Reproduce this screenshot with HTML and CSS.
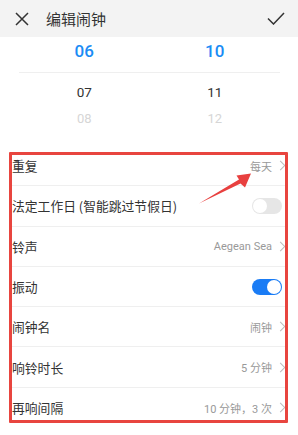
FILE: index.html
```html
<!DOCTYPE html>
<html lang="zh-CN">
<head>
<meta charset="utf-8">
<link rel="stylesheet" href="styles.css">
</head>
<body>
<div class="page">
  <header class="topbar">
    <svg class="ico-close" width="14" height="14" viewBox="0 0 14 14"><path d="M1 1 L13 13 M13 1 L1 13" stroke="#333" stroke-width="1.5" fill="none"/></svg>
    <span class="title">编辑闹钟</span>
    <svg class="ico-check" width="18" height="13" viewBox="0 0 18 13"><path d="M1 6.5 L6.5 12 L17 1" stroke="#333" stroke-width="1.5" fill="none"/></svg>
  </header>
  <section class="picker">
    <div class="prow sel"><span>06</span><span>10</span></div>
    <div class="prow next"><span>07</span><span>11</span></div>
    <div class="prow far"><span>08</span><span>12</span></div>
  </section>
  <section class="list">
    <div class="row"><span class="label">重复</span><span class="val">每天<i class="chev"></i></span></div>
    <div class="row"><span class="label">法定工作日 (智能跳过节假日)</span><span class="switch"></span></div>
    <div class="row"><span class="label">铃声</span><span class="val">Aegean Sea<i class="chev"></i></span></div>
    <div class="row"><span class="label">振动</span><span class="switch on"></span></div>
    <div class="row"><span class="label">闹钟名</span><span class="val">闹钟<i class="chev"></i></span></div>
    <div class="row"><span class="label">响铃时长</span><span class="val">5 分钟<i class="chev"></i></span></div>
    <div class="row"><span class="label">再响间隔</span><span class="val">10 分钟，3 次<i class="chev"></i></span></div>
  </section>
  <div class="redbox"></div>
  <svg class="arrow" width="298" height="435" viewBox="0 0 298 435"><polygon points="199,203.5 240.5,183.5 245,187.5 251,173.5 236.5,175.5 239,179.5" fill="#e8403f"/></svg>
</div>
</body>
</html>
```
FILE: styles.css
```css
* { box-sizing: border-box; }
html, body { margin: 0; padding: 0; background: #fff; }
.page {
  position: relative;
  width: 298px;
  height: 435px;
  overflow: hidden;
  font-family: Roboto, "Noto Sans CJK SC", sans-serif;
  color: #333;
}
.topbar {
  height: 37px;
  background: #f3f3f3;
  display: flex;
  align-items: center;
  padding: 0 13px 0 15px;
}
.ico-close { flex: none; }
.title {
  margin-left: 17px;
  font-size: 15px;
  color: #333;
  font-family: "Noto Sans CJK SC", sans-serif;
  flex: 1;
}
.ico-check { flex: none; margin-top: -1px; }
.picker {
  padding: 0 18px 0 19px;
  height: 109px;
}
.prow {
  display: grid;
  grid-template-columns: 1fr 1fr;
  text-align: center;
}
.prow.sel {
  height: 36px;
  line-height: 28px;
  font-size: 17px;
  font-weight: 500;
  color: #1a8cf5;
  border-bottom: 1px solid #efefef;
}
.prow.next {
  height: 38px;
  line-height: 38px;
  font-size: 13.5px;
  color: #333;
}
.prow.far {
  height: 16px;
  line-height: 16px;
  font-size: 13px;
  color: #d6d6d6;
}
.list { margin: 0 12px; }
.row {
  height: 40.3px;
  display: flex;
  align-items: center;
  justify-content: space-between;
  border-bottom: 1px solid #efefef;
  padding-right: 0;
}
.row:last-child { border-bottom: none; }
.label {
  font-size: 12.8px;
  color: #333;
  font-family: "Noto Sans CJK SC", sans-serif;
}
.val {
  display: flex;
  align-items: center;
  font-size: 11px;
  color: #999;
}
.chev {
  display: inline-block;
  width: 7px;
  height: 7px;
  border-top: 1px solid #bbb;
  border-right: 1px solid #bbb;
  transform: rotate(45deg);
  margin-left: 5px;
  margin-right: 2px;
}
.switch {
  position: relative;
  width: 30px;
  height: 16px;
  border-radius: 8px;
  background: #e6e6e6;
  margin-right: 4px;
}
.switch::after {
  content: "";
  position: absolute;
  left: 1px;
  top: 1px;
  width: 14px;
  height: 14px;
  border-radius: 50%;
  background: #fff;
}
.switch.on { background: #1a7cf5; }
.switch.on::after { left: 15px; }
.redbox {
  position: absolute;
  left: 9px;
  top: 152px;
  width: 279px;
  height: 271px;
  border: 3px solid #e8453f;
  border-radius: 1px;
}
.arrow { position: absolute; left: 0; top: 0; }
```
